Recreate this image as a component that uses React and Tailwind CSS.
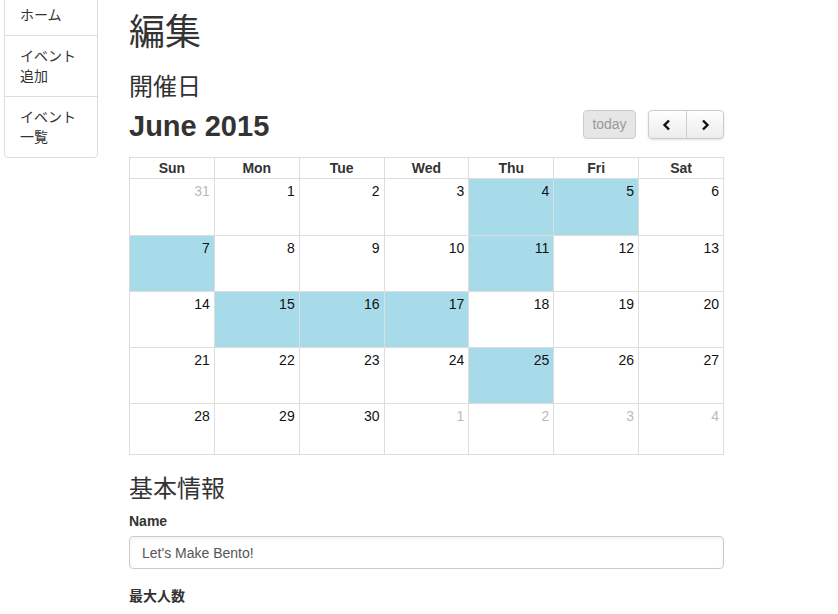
import React from 'react';

const FONT = '"Liberation Sans", "Noto Sans CJK JP", sans-serif';

const menu = [['ホーム'], ['イベント', '追加'], ['イベント', '一覧']];

// June 2015 grid, [day, otherMonth]
const weeks = [
  [[31, true], [1], [2], [3], [4], [5], [6]],
  [[7], [8], [9], [10], [11], [12], [13]],
  [[14], [15], [16], [17], [18], [19], [20]],
  [[21], [22], [23], [24], [25], [26], [27]],
  [[28], [29], [30], [1, true], [2, true], [3, true], [4, true]],
];
const selected = [4, 5, 7, 11, 15, 16, 17, 25];
const rowHeights = ['h-[57px]', 'h-[56px]', 'h-[56px]', 'h-[56px]', 'h-[51px]'];
const dayNames = ['Sun', 'Mon', 'Tue', 'Wed', 'Thu', 'Fri', 'Sat'];

function Sidebar() {
  return (
    <div className="ml-1 mt-[-6px] w-[94px] shrink-0 self-start rounded-b border border-[#ddd] bg-white">
      {menu.map((lines, i) => (
        <div
          key={i}
          className={`px-[15px] py-[10px] text-[14px] leading-[20px] text-[#333] ${i > 0 ? 'border-t border-[#ddd]' : ''}`}
        >
          {lines.map((l) => (
            <div key={l}>{l}</div>
          ))}
        </div>
      ))}
    </div>
  );
}

function Calendar() {
  return (
    <div>
      <div className="mt-[6px] flex items-center justify-between">
        <h2 className="pt-[3px] text-[29px] font-bold leading-[34px] text-[#333]">June 2015</h2>
        <div className="flex items-center">
          <button className="h-[29px] w-[53px] rounded border border-[#ccc] bg-[#e6e6e6] text-[14px] text-[#999]">
            today
          </button>
          <div className="ml-3 flex h-[29px] w-[76px] rounded border border-[#ccc] bg-gradient-to-b from-white to-[#ececec] shadow-sm">
            <button className="flex flex-1 items-center justify-center border-r border-[#ccc]">
              <svg width="10" height="12" viewBox="0 0 10 12">
                <path d="M7 1.5 L2.5 6 L7 10.5" fill="none" stroke="#111" strokeWidth="2.4" />
              </svg>
            </button>
            <button className="flex flex-1 items-center justify-center">
              <svg width="10" height="12" viewBox="0 0 10 12">
                <path d="M3 1.5 L7.5 6 L3 10.5" fill="none" stroke="#111" strokeWidth="2.4" />
              </svg>
            </button>
          </div>
        </div>
      </div>
      <table className="mt-[14px] w-full table-fixed border-collapse">
        <thead>
          <tr>
            {dayNames.map((d) => (
              <th key={d} className="h-[21px] border border-[#ddd] p-0 text-center text-[14px] font-bold leading-[20px] text-[#333]">
                {d}
              </th>
            ))}
          </tr>
        </thead>
        <tbody>
          {weeks.map((week, r) => (
            <tr key={r} className={rowHeights[r]}>
              {week.map(([day, other]) => {
                const sel = !other && selected.includes(day);
                return (
                  <td
                    key={`${r}-${day}`}
                    className={`border border-[#ddd] px-1 pt-[4px] text-right align-top text-[14px] leading-[16px] ${sel ? 'bg-[#a8dbea]' : ''} ${other ? 'text-[#bbb]' : 'text-[#111]'}`}
                  >
                    {day}
                  </td>
                );
              })}
            </tr>
          ))}
        </tbody>
      </table>
    </div>
  );
}

export default function App() {
  return (
    <div className="flex min-h-[614px] overflow-hidden bg-white" style={{ fontFamily: FONT }}>
      <Sidebar />
      <main className="ml-[31px] w-[595px] shrink-0">
        <h1 className="mt-[13px] text-[36px] leading-[40px] text-[#333]">編集</h1>
        <h3 className="mt-[21px] text-[24px] leading-[26px] text-[#333]">開催日</h3>
        <Calendar />
        <h3 className="mt-[20px] text-[24px] leading-[28px] text-[#333]">基本情報</h3>
        <div className="mt-[8px] text-[14px] font-bold leading-[20px] text-[#333]">Name</div>
        <input
          readOnly
          value="Let's Make Bento!"
          className="mt-[5px] block h-[33px] w-full rounded border border-[#ccc] px-3 text-[14px] text-[#555] shadow-inner outline-none"
        />
        <div className="mt-[17px] text-[14px] font-bold leading-[20px] text-[#333]">最大人数</div>
      </main>
    </div>
  );
}
